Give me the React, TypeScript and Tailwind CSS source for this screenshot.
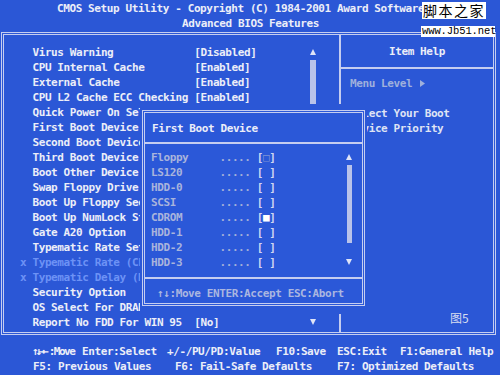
import React from 'react'

const rows: [string, string, string, boolean?][] = [
  ['', 'Virus Warning', '[Disabled]'],
  ['', 'CPU Internal Cache', '[Enabled]'],
  ['', 'External Cache', '[Enabled]'],
  ['', 'CPU L2 Cache ECC Checking', '[Enabled]'],
  ['', 'Quick Power On Self Test', '[Enabled]'],
  ['', 'First Boot Device', '[Floppy]'],
  ['', 'Second Boot Device', '[HDD-0]'],
  ['', 'Third Boot Device', '[LS120]'],
  ['', 'Boot Other Device', '[Enabled]'],
  ['', 'Swap Floppy Drive', '[Disabled]'],
  ['', 'Boot Up Floppy Seek', '[Enabled]'],
  ['', 'Boot Up NumLock Status', '[On]'],
  ['', 'Gate A20 Option', '[Fast]'],
  ['', 'Typematic Rate Setting', '[Disabled]'],
  ['x', 'Typematic Rate (Chars/Sec)', '6', true],
  ['x', 'Typematic Delay (Msec)', '250', true],
  ['', 'Security Option', '[Setup]'],
  ['', 'OS Select For DRAM > 64MB', '[Non-OS2]'],
  ['', 'Report No FDD For WIN 95', '[No]'],
]

const devices = ['Floppy', 'LS120', 'HDD-0', 'SCSI', 'CDROM', 'HDD-1', 'HDD-2', 'HDD-3']

function Up({ color = '#dfe4f7' }: { color?: string }) {
  return (
    <svg width="6" height="6" viewBox="0 0 6 6">
      <path d="M3 0 L6 6 H0Z" fill={color} />
    </svg>
  )
}

function Down({ color = '#dfe4f7' }: { color?: string }) {
  return (
    <svg width="6" height="6" viewBox="0 0 6 6">
      <path d="M0 0 H6 L3 6Z" fill={color} />
    </svg>
  )
}

export default function App() {
  return (
    <div className="relative h-[375px] w-[500px] overflow-hidden bg-[#2b57d6] font-['DejaVu_Sans_Mono','Liberation_Mono',monospace] text-[11px] font-bold leading-[15px] tracking-[-0.4px] text-[#eceef8]">
      {/* title */}
      <div className="h-[32px] pt-[0.5px] whitespace-pre">
        <div className="pl-[57px]">CMOS Setup Utility - Copyright (C) 1984-2001 Award Software</div>
        <div className="pl-[182px]">Advanced BIOS Features</div>
      </div>

      {/* main box */}
      <div className="ml-[1px] flex h-[303px] w-[495px] border-[3px] border-double border-[#c5cdf0]">
        <div className="flex w-[335px] pt-[10px] pb-[2px]">
          <div className="w-[305px] pl-[16px] whitespace-pre">
            {rows.map(([mark, label, value, dim]) => (
              <div key={label} className={dim ? 'h-[15px] text-[#6d92f5]' : 'h-[15px]'}>
                {(mark || ' ').padEnd(2) + label.padEnd(26) + value}
              </div>
            ))}
          </div>
          <div className="flex w-[7px] flex-col items-center">
            <div className="mt-[4px]">
              <Up />
            </div>
            <div className="mt-[5px] h-[140px] w-[6px] bg-[#b9c3ea]" />
            <div className="mt-auto mb-[5px]">
              <Down />
            </div>
          </div>
        </div>
        <div className="w-[2px] bg-[#c5cdf0]" />
        <div className="flex w-[152px] flex-col">
          <div className="flex h-[32px] items-center justify-center">Item Help</div>
          <div className="h-[2px] bg-[#c5cdf0]" />
          <div className="pl-[9px] pt-[6.5px] whitespace-pre">
            <div className="flex h-[15px] items-center gap-[8px] text-[#9fb0dc]">
              <span>Menu Level</span>
              <svg width="5" height="7" viewBox="0 0 5 7">
                <path d="M0 0 L5 3.5 L0 7Z" fill="#9fb0dc" />
              </svg>
            </div>
            <div className="h-[15px]" />
            <div className="h-[15px] text-[#dfe3f4]">Select Your Boot</div>
            <div className="h-[15px] text-[#dfe3f4]">Device Priority</div>
          </div>
          <div className="mt-auto mb-[7.5px] pl-[109px] font-['Noto_Sans_CJK_SC',sans-serif] text-[12px] font-normal tracking-normal text-[#d7dcf0]">
            图5
          </div>
        </div>
      </div>

      {/* footer */}
      <div className="pt-[8.5px] whitespace-pre">
        <div className="flex h-[15px] pl-[32px]">
          <span className="w-[50px]">
            <span className="tracking-[-3.2px]">↑↓→←</span>
            <span className="pl-[3px] tracking-[-1.5px]">:Move</span>
          </span>
          <span className="w-[85px]">Enter:Select</span>
          <span className="w-[109px]">+/-/PU/PD:Value</span>
          <span className="w-[61px]">F10:Save</span>
          <span className="w-[63px]">ESC:Exit</span>
          <span>F1:General Help</span>
        </div>
        <div className="flex h-[15px] pl-[33px]">
          <span className="w-[142px]">F5: Previous Values</span>
          <span className="w-[162px]">F6: Fail-Safe Defaults</span>
          <span>F7: Optimized Defaults</span>
        </div>
      </div>

      {/* popup, with a blank margin that hides the rows behind it */}
      <div className="absolute left-[140px] top-[104px] bg-[#2b57d6] px-[2px] pt-[6px] pb-[8px]">
        <div className="flex h-[196px] w-[223px] flex-col border-[3px] border-double border-[#c5cdf0] bg-[#2b58d8]">
          <div className="pl-[7px] pt-[7.5px] whitespace-pre">First Boot Device</div>
          <div className="mt-[6.5px] h-[2px] bg-[#c5cdf0]" />
          <div className="mt-[5.5px] flex h-[120px]">
            <div className="w-[201px] pl-[6px] whitespace-pre">
              {devices.map((d) => (
                <div key={d} className="h-[15px] text-[#a9b4dc]">
                  {d.padEnd(11)}
                  <span className="text-[#a3afd8]">..... </span>
                  <span className="text-[#d0d6f0]">
                    [
                    {d === 'CDROM' ? (
                      <span className="text-white">■</span>
                    ) : d === 'Floppy' ? (
                      <span className="text-[#7f93d4]">□</span>
                    ) : (
                      ' '
                    )}
                    ]
                  </span>
                </div>
              ))}
            </div>
            <div className="flex w-[6px] flex-col items-center">
              <div className="mt-[4.5px]">
                <Up />
              </div>
              <div className="mt-[5px] h-[78px] w-[5px] bg-[#b9c3ea]" />
              <div className="mt-auto mb-[4.5px]">
                <Down />
              </div>
            </div>
          </div>
          <div className="mt-[7px] h-[2px] bg-[#c5cdf0]" />
          <div className="mt-[7px] pl-[12px] whitespace-pre text-[#aab6e0]">↑↓:Move ENTER:Accept ESC:Abort</div>
        </div>
      </div>

      {/* watermark */}
      <div className="absolute left-[422px] top-[2px] bg-white px-[1px] font-['Noto_Sans_CJK_SC',sans-serif] text-[14px] font-normal leading-[17px] tracking-[1.5px] text-black">
        脚本之家
      </div>
      <div className="absolute left-[421px] top-[26px] w-[74px] bg-white pl-[1px] font-['Liberation_Mono',monospace] text-[10.5px] font-normal leading-[11px] tracking-[-0.1px] text-black">
        www.Jb51.net
      </div>
    </div>
  )
}
